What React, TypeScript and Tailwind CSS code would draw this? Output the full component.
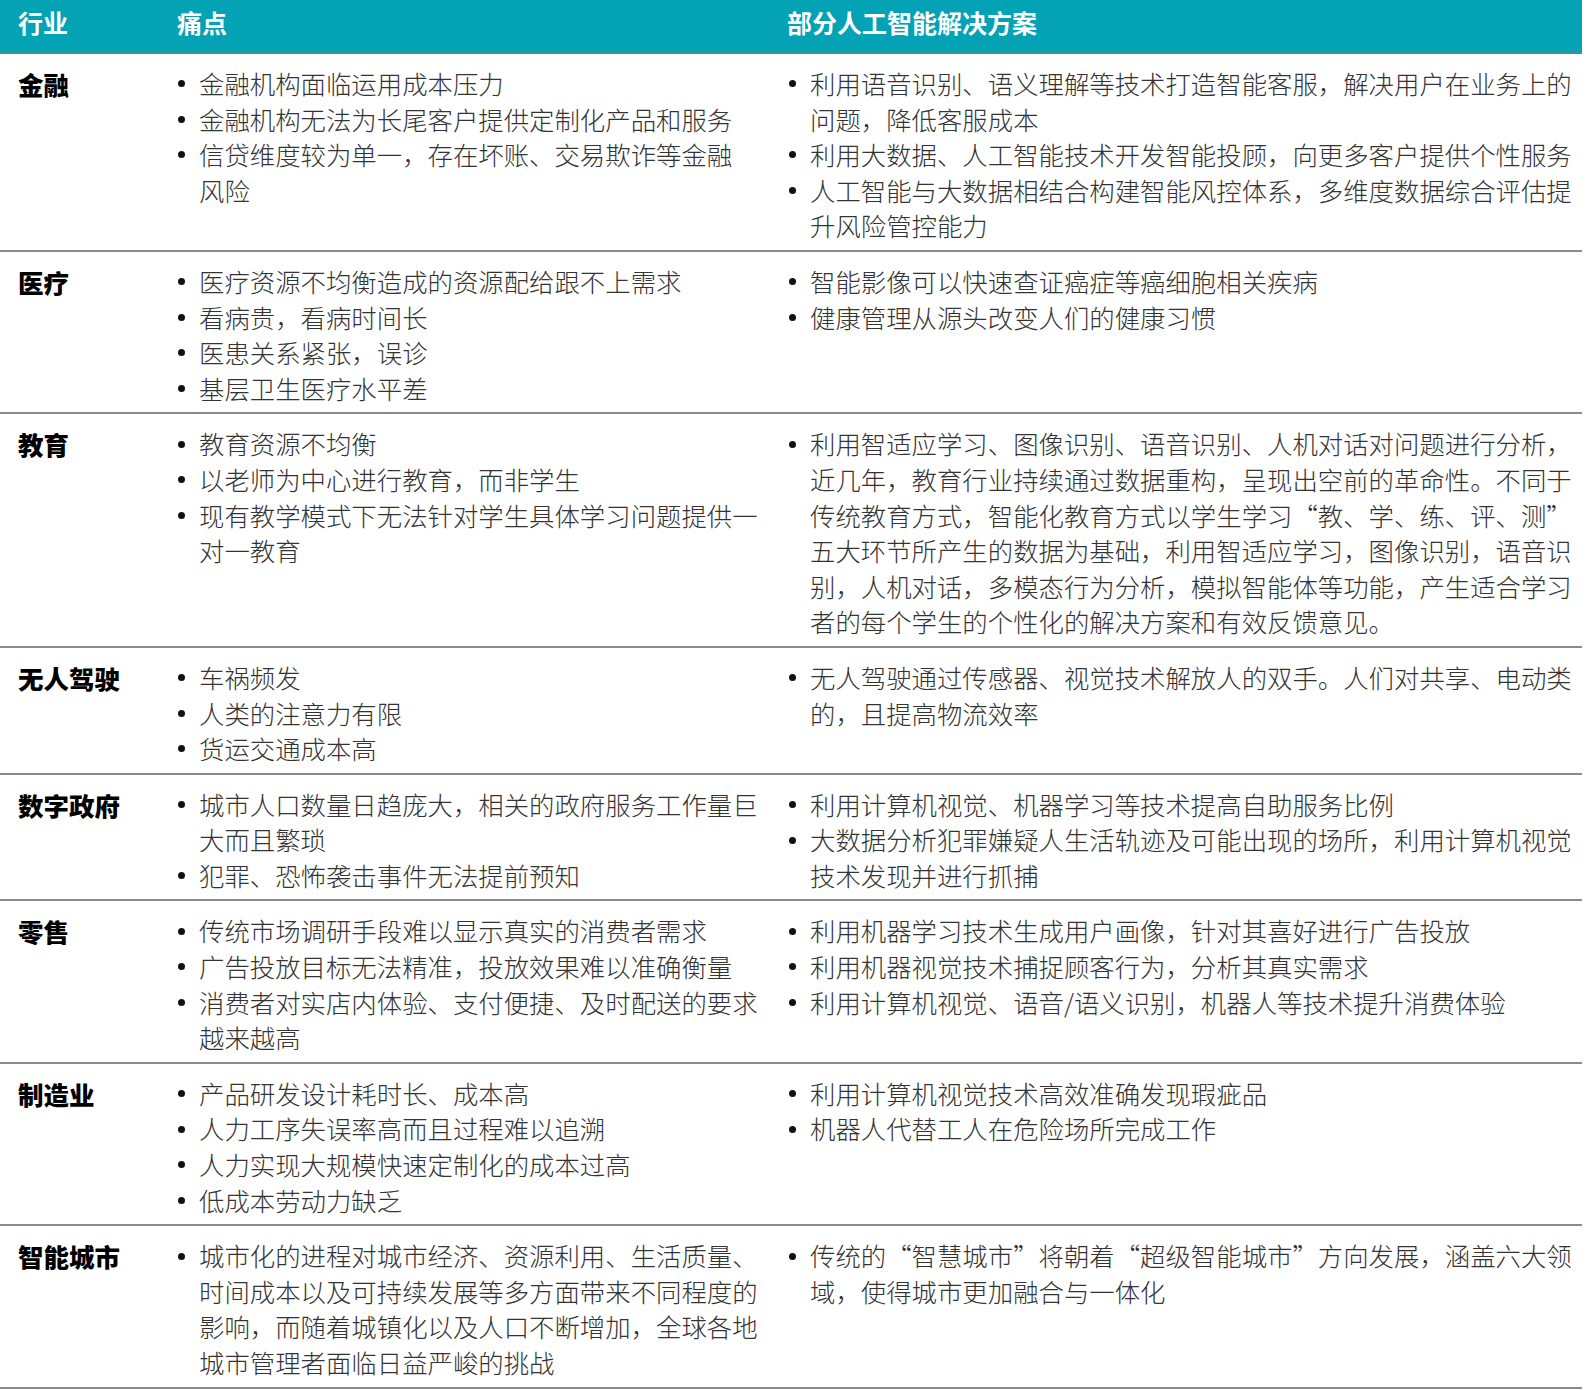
type Row = {
  name: string;
  pains: string[][];
  solutions: string[][];
};

const rows: Row[] = [
  {
    name: "金融",
    pains: [
      ["金融机构面临运用成本压力"],
      ["金融机构无法为长尾客户提供定制化产品和服务"],
      ["信贷维度较为单一，存在坏账、交易欺诈等金融", "风险"],
    ],
    solutions: [
      ["利用语音识别、语义理解等技术打造智能客服，解决用户在业务上的", "问题，降低客服成本"],
      ["利用大数据、人工智能技术开发智能投顾，向更多客户提供个性服务"],
      ["人工智能与大数据相结合构建智能风控体系，多维度数据综合评估提", "升风险管控能力"],
    ],
  },
  {
    name: "医疗",
    pains: [
      ["医疗资源不均衡造成的资源配给跟不上需求"],
      ["看病贵，看病时间长"],
      ["医患关系紧张，误诊"],
      ["基层卫生医疗水平差"],
    ],
    solutions: [
      ["智能影像可以快速查证癌症等癌细胞相关疾病"],
      ["健康管理从源头改变人们的健康习惯"],
    ],
  },
  {
    name: "教育",
    pains: [
      ["教育资源不均衡"],
      ["以老师为中心进行教育，而非学生"],
      ["现有教学模式下无法针对学生具体学习问题提供一", "对一教育"],
    ],
    solutions: [
      [
        "利用智适应学习、图像识别、语音识别、人机对话对问题进行分析，",
        "近几年，教育行业持续通过数据重构，呈现出空前的革命性。不同于",
        "传统教育方式，智能化教育方式以学生学习“教、学、练、评、测”",
        "五大环节所产生的数据为基础，利用智适应学习，图像识别，语音识",
        "别，人机对话，多模态行为分析，模拟智能体等功能，产生适合学习",
        "者的每个学生的个性化的解决方案和有效反馈意见。",
      ],
    ],
  },
  {
    name: "无人驾驶",
    pains: [["车祸频发"], ["人类的注意力有限"], ["货运交通成本高"]],
    solutions: [
      ["无人驾驶通过传感器、视觉技术解放人的双手。人们对共享、电动类", "的，且提高物流效率"],
    ],
  },
  {
    name: "数字政府",
    pains: [
      ["城市人口数量日趋庞大，相关的政府服务工作量巨", "大而且繁琐"],
      ["犯罪、恐怖袭击事件无法提前预知"],
    ],
    solutions: [
      ["利用计算机视觉、机器学习等技术提高自助服务比例"],
      ["大数据分析犯罪嫌疑人生活轨迹及可能出现的场所，利用计算机视觉", "技术发现并进行抓捕"],
    ],
  },
  {
    name: "零售",
    pains: [
      ["传统市场调研手段难以显示真实的消费者需求"],
      ["广告投放目标无法精准，投放效果难以准确衡量"],
      ["消费者对实店内体验、支付便捷、及时配送的要求", "越来越高"],
    ],
    solutions: [
      ["利用机器学习技术生成用户画像，针对其喜好进行广告投放"],
      ["利用机器视觉技术捕捉顾客行为，分析其真实需求"],
      ["利用计算机视觉、语音/语义识别，机器人等技术提升消费体验"],
    ],
  },
  {
    name: "制造业",
    pains: [
      ["产品研发设计耗时长、成本高"],
      ["人力工序失误率高而且过程难以追溯"],
      ["人力实现大规模快速定制化的成本过高"],
      ["低成本劳动力缺乏"],
    ],
    solutions: [
      ["利用计算机视觉技术高效准确发现瑕疵品"],
      ["机器人代替工人在危险场所完成工作"],
    ],
  },
  {
    name: "智能城市",
    pains: [
      [
        "城市化的进程对城市经济、资源利用、生活质量、",
        "时间成本以及可持续发展等多方面带来不同程度的",
        "影响，而随着城镇化以及人口不断增加，全球各地",
        "城市管理者面临日益严峻的挑战",
      ],
    ],
    solutions: [
      ["传统的“智慧城市”将朝着“超级智能城市”方向发展，涵盖六大领", "域，使得城市更加融合与一体化"],
    ],
  },
];

const BulletList = ({ items }: { items: string[][] }) => (
  <ul className="flex flex-col pl-[8px]">
    {items.map((lines, i) => (
      <li key={i} className="flex">
        <span className="flex h-[35.6px] w-[21px] shrink-0 items-center">
          <span className="block h-[7px] w-[7px] rounded-full bg-[#111]" />
        </span>
        <div className="flex flex-col">
          {lines.map((line, j) => (
            <span key={j} className="whitespace-nowrap">
              {line}
            </span>
          ))}
        </div>
      </li>
    ))}
  </ul>
);

const App: React.FC = () => {
  return (
    <div
      className="min-h-screen bg-white"
      style={{ fontFamily: '"Noto Sans CJK SC", "Noto Sans", sans-serif' }}
    >
      <div className="w-[1582px]">
        <div className="grid h-[54px] grid-cols-[170px_611px_1fr] items-center border-b-2 border-[#3f8f98] bg-[#03a2b4] pb-[6px] text-[25px] font-bold text-white">
          <div className="pl-[18px]">行业</div>
          <div className="pl-[7px]">痛点</div>
          <div className="pl-[6px]">部分人工智能解决方案</div>
        </div>
        {rows.map((row) => (
          <div
            key={row.name}
            className="grid grid-cols-[170px_611px_1fr] border-b-2 border-[#8a8a8a] pt-[12px] pb-[6px] text-[25.4px] font-light leading-[35.6px] text-[#333]"
          >
            <div className="pl-[18px] text-[25.5px] font-black text-black">{row.name}</div>
            <BulletList items={row.pains} />
            <BulletList items={row.solutions} />
          </div>
        ))}
      </div>
    </div>
  );
};

export default App;
